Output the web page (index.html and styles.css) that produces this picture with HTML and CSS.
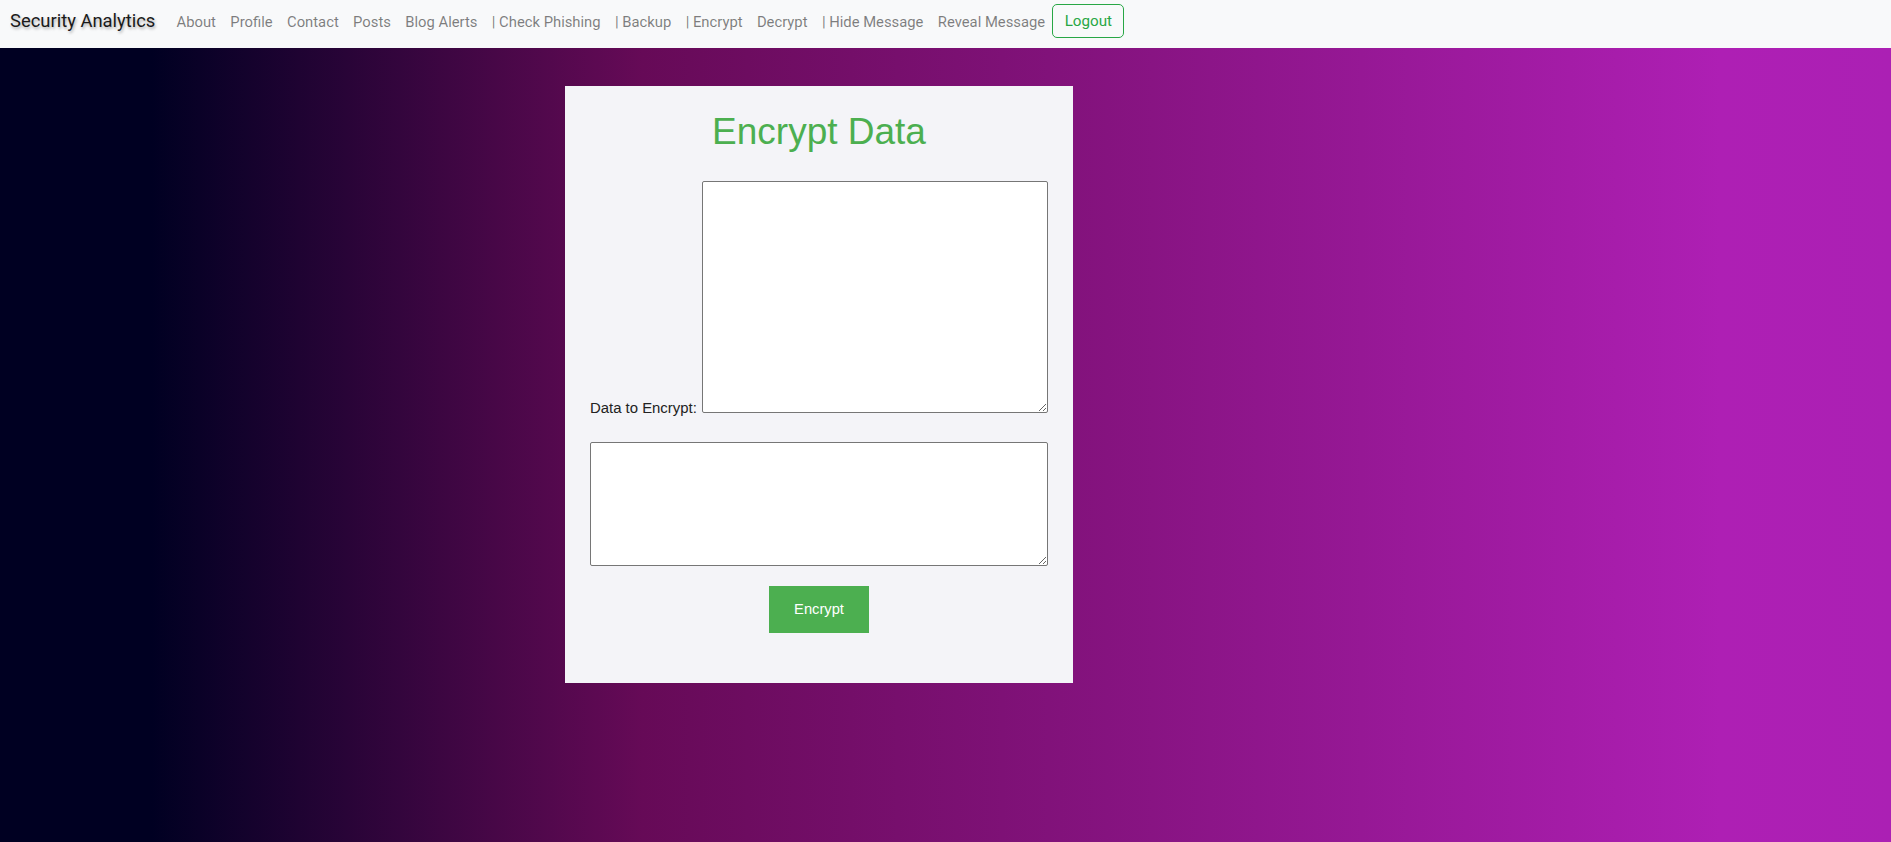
FILE: index.html
```html
<!DOCTYPE html>
<html lang="en">
<head>
<meta charset="utf-8">
<title>Encrypt Data</title>
<link rel="stylesheet" href="styles.css">
</head>
<body>
<nav class="navbar">
  <a class="brand" href="#">Security Analytics</a>
  <ul class="nav-links">
    <li><a href="#">About</a></li>
    <li><a href="#">Profile</a></li>
    <li><a href="#">Contact</a></li>
    <li><a href="#">Posts</a></li>
    <li><a href="#">Blog Alerts</a></li>
    <li><a href="#">| Check Phishing</a></li>
    <li><a href="#">| Backup</a></li>
    <li><a href="#">| Encrypt</a></li>
    <li><a href="#">Decrypt</a></li>
    <li><a href="#">| Hide Message</a></li>
    <li><a href="#">Reveal Message</a></li>
  </ul>
  <button class="logout" type="button">Logout</button>
</nav>
<main class="page">
  <section class="card">
    <h1 class="title">Encrypt Data</h1>
    <form class="form">
      <div class="row-input"><label for="data">Data to Encrypt:</label><textarea id="data" class="ta-input"></textarea></div>
      <textarea class="ta-output" readonly></textarea>
      <div class="actions"><button class="btn-encrypt" type="button">Encrypt</button></div>
    </form>
  </section>
</main>
</body>
</html>
```
FILE: styles.css
```css
html, body {
  margin: 0;
  padding: 0;
}
body {
  min-height: 100vh;
  background: linear-gradient(to right, #000022 0%, #000022 8%, #660a57 34%, #ae1fb4 91%, #ab20b4 100%);
  font-family: "Liberation Sans", Arial, sans-serif;
}
.navbar {
  height: 48px;
  box-sizing: border-box;
  background: #f8f9fa;
  display: flex;
  align-items: flex-start;
  padding: 4px 0 0 10px;
  font-family: Roboto, "Noto Sans", sans-serif;
}
.brand {
  font-size: 18.4px;
  color: #1a1a1a;
  text-decoration: none;
  text-shadow: 1px 2px 3px rgba(0, 0, 0, 0.3);
  margin: 5px 14px 0 0;
  line-height: 24px;
}
.nav-links {
  list-style: none;
  margin: 0;
  padding: 0;
  display: flex;
}
.nav-links a {
  display: block;
  padding: 5.5px 7.2px 10.5px;
  font-size: 14.8px;
  line-height: 24px;
  color: rgba(0, 0, 0, 0.5);
  text-decoration: none;
}
.logout {
  height: 34px;
  width: 72px;
  border: 1px solid #28a745;
  border-radius: 5px;
  background: transparent;
  color: #28a745;
  font-family: Roboto, "Noto Sans", sans-serif;
  font-size: 15.2px;
  padding: 0 0 1px;
  margin: 0;
}
.page {
  padding: 38px 0 40px 565px;
}
.card {
  width: 508px;
  box-sizing: border-box;
  background: #f4f4f8;
  padding: 25px 25px 50px;
}
.title {
  margin: 0;
  text-align: center;
  font-family: "Liberation Sans", Arial, sans-serif;
  font-weight: normal;
  font-size: 37px;
  color: #4caf50;
}
.form {
  margin: 27.5px 0 0;
}
.row-input {
  font-size: 14.9px;
  color: #222;
  white-space: nowrap;
  margin-bottom: 26px;
}
.row-input label {
  margin-right: 5.5px;
}
textarea {
  margin: 0;
  box-sizing: border-box;
  border: 1px solid #767676;
  border-radius: 2px;
  background: #fff;
  padding: 2px;
  font-family: "Liberation Mono", monospace;
  font-size: 13px;
}
.ta-input {
  width: 346px;
  height: 232px;
  vertical-align: baseline;
}
.ta-output {
  display: block;
  width: 100%;
  height: 124px;
}
.actions {
  display: flex;
  justify-content: center;
  margin-top: 20px;
}
.btn-encrypt {
  background: #4caf50;
  color: #fff;
  border: none;
  border-radius: 0;
  padding: 15px 25px;
  font-family: "Liberation Sans", Arial, sans-serif;
  font-size: 14.7px;
  line-height: 17px;
}
```
